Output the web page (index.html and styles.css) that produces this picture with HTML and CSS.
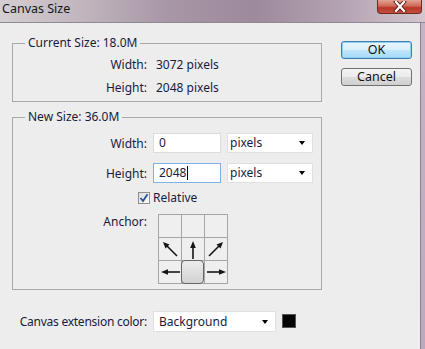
FILE: index.html
```html
<!DOCTYPE html>
<html lang="en">
<head>
  <meta charset="UTF-8" />
  <title>Canvas Size</title>
  <link rel="stylesheet" href="styles.css">
</head>
<body>
  <div class="window">
    <div class="titlebar">
      <span class="title">Canvas Size</span>
      <div class="close">
        <svg width="16" height="11" viewBox="0 0 16 11">
          <path d="M4 1 L12 10 M12 1 L4 10" stroke="#5a1a14" stroke-width="4" stroke-linecap="square"/>
          <path d="M4 1 L12 10 M12 1 L4 10" stroke="#fff" stroke-width="2.2" stroke-linecap="square"/>
        </svg>
      </div>
    </div>
    <div class="client">
      <div class="main">
        <fieldset class="group current">
          <legend>Current Size: 18.0M</legend>
          <div class="info-row">
            <span class="label">Width:</span>
            <span class="value">3072 pixels</span>
          </div>
          <div class="info-row">
            <span class="label">Height:</span>
            <span class="value">2048 pixels</span>
          </div>
        </fieldset>

        <fieldset class="group new">
          <legend>New Size: 36.0M</legend>
          <div class="field-row">
            <span class="label">Width:</span>
            <div class="field">0</div>
            <div class="select units"><span>pixels</span><i class="caret"></i></div>
          </div>
          <div class="field-row">
            <span class="label">Height:</span>
            <div class="field focused">2048<i class="cursor"></i></div>
            <div class="select units"><span>pixels</span><i class="caret"></i></div>
          </div>
          <div class="check-row">
            <span class="checkbox">
              <svg width="10" height="10" viewBox="0 0 10 10">
                <path d="M1.5 5 L4 8 L8.5 1.2" fill="none" stroke="#2e4f95" stroke-width="1.8"/>
              </svg>
            </span>
            <span>Relative</span>
          </div>
          <div class="anchor-row">
            <span class="label">Anchor:</span>
            <div class="anchor">
              <div class="cell"></div>
              <div class="cell"></div>
              <div class="cell"></div>
              <div class="cell">
                <svg width="22" height="22" viewBox="0 0 22 22">
                  <path d="M18 18 L7 7" stroke="#161616" stroke-width="1.6"/>
                  <polygon points="4,4 10.5,6.5 6.5,10.5" fill="#161616"/>
                </svg>
              </div>
              <div class="cell">
                <svg width="22" height="22" viewBox="0 0 22 22">
                  <path d="M11 21 L11 8" stroke="#161616" stroke-width="1.6"/>
                  <polygon points="11,3 8.2,10 13.8,10" fill="#161616"/>
                </svg>
              </div>
              <div class="cell">
                <svg width="22" height="22" viewBox="0 0 22 22">
                  <path d="M4 18 L15 7" stroke="#161616" stroke-width="1.6"/>
                  <polygon points="18,4 11.5,6.5 15.5,10.5" fill="#161616"/>
                </svg>
              </div>
              <div class="cell">
                <svg width="22" height="22" viewBox="0 0 22 22">
                  <path d="M21 11 L7 11" stroke="#161616" stroke-width="1.6"/>
                  <polygon points="2,11 9,8.2 9,13.8" fill="#161616"/>
                </svg>
              </div>
              <div class="cell"><div class="knob"></div></div>
              <div class="cell">
                <svg width="22" height="22" viewBox="0 0 22 22">
                  <path d="M2 11 L15 11" stroke="#161616" stroke-width="1.6"/>
                  <polygon points="21,11 14,8.2 14,13.8" fill="#161616"/>
                </svg>
              </div>
            </div>
          </div>
        </fieldset>

        <div class="ext-row">
          <span class="label ext-label">Canvas extension color:</span>
          <div class="select ext"><span>Background</span><i class="caret"></i></div>
          <span class="swatch"></span>
        </div>
      </div>

      <div class="buttons">
        <div class="btn default">OK</div>
        <div class="btn">Cancel</div>
      </div>
    </div>
  </div>
</body>
</html>
```

FILE: styles.css
```css
    body {
      margin: 0;
      background: #ededed;
      font-family: "Noto Sans", "DejaVu Sans", sans-serif;
      font-size: 12px;
      color: #1a1a3c;
    }
    .window {
      width: 425px;
      height: 349px;
      background: linear-gradient(180deg, #c4b6c6, #b9aabd);
      overflow: hidden;
    }
    .titlebar {
      height: 22px;
      display: flex;
      align-items: flex-start;
      background: linear-gradient(90deg, #d4ced1 0%, #c2b7bf 18%, #a796a6 40%, #9d8a9c 60%, #b3a2b2 80%, #d3c6ce 100%);
      border-bottom: 1px solid #8f8a95;
    }
    .title {
      padding: 1px 0 0 2px;
      font-size: 12.5px;
      line-height: 16px;
      color: #161616;
    }
    .close {
      margin-left: auto;
      margin-right: 3px;
      width: 45px;
      height: 14px;
      box-sizing: border-box;
      border: 1px solid #6e2a22;
      border-top: none;
      border-radius: 0 0 4px 4px;
      background: linear-gradient(180deg, #e5a294 0%, #d06a58 45%, #b8362a 60%, #c5503c 100%);
      display: flex;
      justify-content: center;
      align-items: center;
    }
    .client {
      width: 421px;
      height: 326px;
      box-sizing: border-box;
      background: #ededed;
      border-right: 1px solid #8d7f95;
      display: flex;
      align-items: flex-start;
      padding: 12px 0 0 12px;
    }
    .main {
      width: 310px;
    }
    .group {
      margin: 0;
      min-width: 0;
      border: 1px solid #a9a9a9;
      padding: 0;
    }
    .group legend {
      margin-left: 12px;
      padding: 0 3px;
      line-height: 16px;
    }
    .label {
      text-align: right;
    }
    .current {
      padding: 2px 0 2px;
    }
    .info-row {
      display: grid;
      grid-template-columns: 134px 1fr;
      column-gap: 6px;
      height: 23px;
      line-height: 23px;
    }
    .info-row .value {
      padding-left: 3px;
    }
    .new {
      margin-top: 7px;
      padding: 8px 0 5px;
    }
    .field-row {
      display: grid;
      grid-template-columns: 134px 68px 86px;
      column-gap: 6px;
      align-items: center;
      height: 20px;
    }
    .field-row + .field-row {
      margin-top: 10px;
    }
    .field {
      height: 20px;
      box-sizing: border-box;
      background: #fff;
      border: 1px solid #dcdcdc;
      padding-left: 5px;
      line-height: 18px;
      display: flex;
      align-items: center;
    }
    .field.focused {
      border-color: #7fb2e2;
    }
    .cursor {
      width: 1px;
      height: 14px;
      background: #000;
      margin-left: 1px;
    }
    .select {
      height: 20px;
      box-sizing: border-box;
      background: #fff;
      border: 1px solid #e0e0e0;
      display: flex;
      align-items: center;
      line-height: 18px;
    }
    .select.units {
      padding: 0 7px 0 2px;
    }
    .select.ext {
      height: 21px;
      padding: 0 7px 0 5px;
    }
    .caret {
      margin-left: auto;
      width: 0;
      height: 0;
      border-left: 3.5px solid transparent;
      border-right: 3.5px solid transparent;
      border-top: 4px solid #000;
    }
    .check-row {
      margin-top: 7px;
      height: 16px;
      padding-left: 125px;
      display: flex;
      align-items: center;
      gap: 3px;
      line-height: 16px;
    }
    .checkbox {
      width: 12px;
      height: 12px;
      box-sizing: border-box;
      border: 1px solid #8e8f8f;
      background: linear-gradient(135deg, #dcdcdc, #fbfbfb);
      display: flex;
      justify-content: center;
      align-items: center;
    }
    .anchor-row {
      margin-top: 8px;
      display: grid;
      grid-template-columns: 134px auto;
      column-gap: 11px;
      justify-content: start;
      line-height: 16px;
    }
    .anchor {
      display: grid;
      grid-template-columns: repeat(3, 22px);
      grid-template-rows: repeat(3, 22px);
      gap: 1px;
      padding: 1px;
      background: #a6a6a6;
      width: max-content;
    }
    .cell {
      background: #efefef;
      display: flex;
    }
    .knob {
      flex: 1;
      margin: -1px 0 -1px -1px;
      border: 1px solid #676767;
      border-radius: 4px;
      background: linear-gradient(180deg, #ececec, #d2d2d2);
    }
    .ext-row {
      margin-top: 21px;
      padding-left: 1px;
      display: grid;
      grid-template-columns: 134px 123px 14px;
      column-gap: 6px;
      align-items: center;
    }
    .ext-label {
      letter-spacing: -0.25px;
    }
    .swatch {
      width: 14px;
      height: 14px;
      box-sizing: border-box;
      background: #050505;
      border: 1px solid #555;
      margin-top: -2px;
    }
    .buttons {
      margin: 6px 0 0 19px;
      display: flex;
      flex-direction: column;
      gap: 9px;
    }
    .btn {
      width: 71px;
      height: 18px;
      box-sizing: border-box;
      border: 1px solid #707070;
      border-radius: 3px;
      background: linear-gradient(180deg, #f3f3f3 0%, #ebebeb 50%, #dddddd 51%, #cfcfcf 100%);
      text-align: center;
      line-height: 16px;
      color: #111;
      font-size: 12.5px;
    }
    .btn.default {
      border-color: #3c7fb1;
      background: linear-gradient(180deg, #e8f5fc 0%, #d9effb 50%, #bee6fd 51%, #a7d9f5 100%);
      box-shadow: inset 0 0 0 1px #8fd0f2;
    }
```
